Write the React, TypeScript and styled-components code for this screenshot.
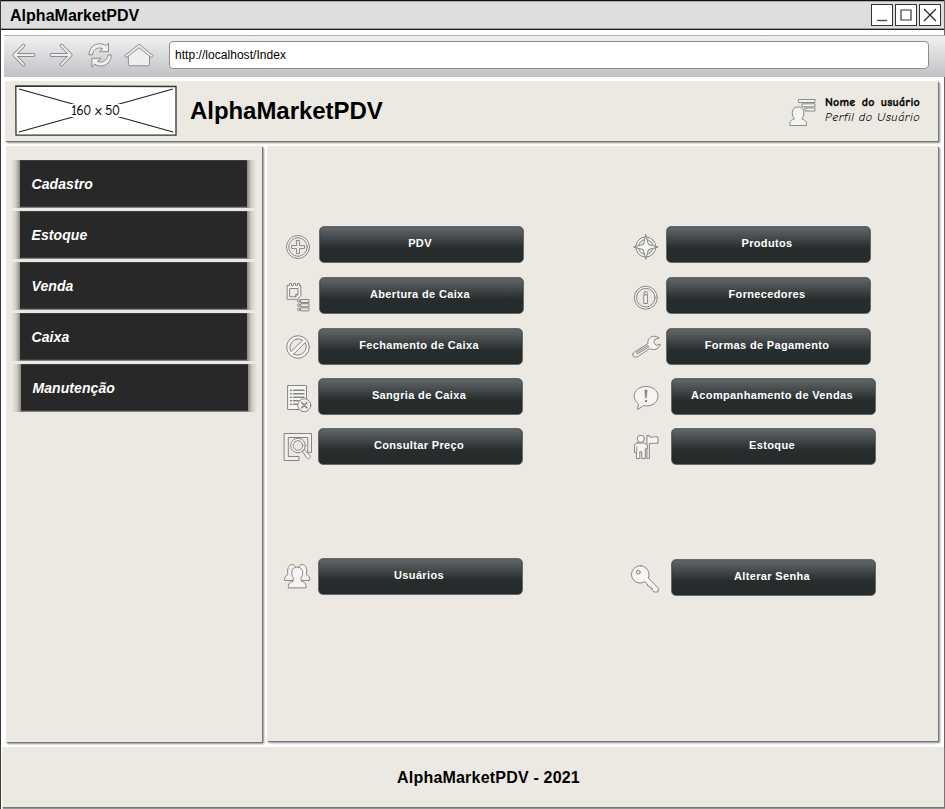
import React from "react";
import styled, { createGlobalStyle } from "styled-components";

const Global = createGlobalStyle`
  * { box-sizing: border-box; }
  body { margin: 0; background: #fff; overflow: hidden; font-family: "Liberation Sans", Arial, sans-serif; color: #000; }
  button { font: inherit; }
`;

const Window = styled.div`
  width: 945px;
  height: 809px;
  display: flex;
  flex-direction: column;
  background: #fff;
  border-left: 1px solid #3a3a3a;
  border-right: 1px solid #666;
`;

const TitleBar = styled.header`
  height: 30px;
  flex: none;
  display: flex;
  align-items: center;
  padding: 0 3px 0 9px;
  background: #dedede;
  border-top: 1px solid #111;
  border-bottom: 1px solid #222;
  box-shadow: inset 0 1px #aaa, inset 0 -1px #999;
`;

const WindowTitle = styled.h1`
  margin: 2px 0 0;
  flex: 1;
  font-size: 16px;
  line-height: 20px;
  font-weight: bold;
  letter-spacing: 0.02px;
`;

const WindowButtons = styled.div`
  display: flex;
  gap: 2px;
`;

const WindowButton = styled.button`
  width: 22px;
  height: 22px;
  padding: 0;
  border: 1.5px solid #333;
  background: #fff;
  display: grid;
  place-items: center;
`;

const Toolbar = styled.nav`
  height: 42px;
  flex: none;
  margin: 5px -1px 0 3px;
  border-top: 1px solid #aeaeb0;
  background: linear-gradient(#f1f1f2, #dddee0 40%, #c1c1c5);
  display: flex;
  align-items: flex-start;
`;

const NavIcons = styled.svg`
  width: 165px;
  height: 41px;
  flex: none;
`;

const Address = styled.div`
  width: 760px;
  height: 28px;
  margin-top: 5px;
  padding-left: 5px;
  border: 1px solid #948b80;
  border-radius: 4px;
  background: #fff;
  font-size: 12px;
  line-height: 26px;
  letter-spacing: 0.04px;
`;

const panelShadow = "1px 1px 1px #777, 2px 2px 2px #999";

const Header = styled.section`
  height: 60px;
  flex: none;
  margin: 4px 6px 0 4px;
  padding: 4px 17px 0 10px;
  display: flex;
  align-items: flex-start;
  background: #ece9e2;
  box-shadow: ${panelShadow};
`;

const LogoPlaceholder = styled.svg`
  width: 162px;
  height: 51px;
  flex: none;
`;

const Brand = styled.h2`
  margin: 12px 0 0 13px;
  flex: 1;
  font-size: 24px;
  line-height: 28px;
  font-weight: bold;
  letter-spacing: -0.05px;
`;

const UserIcon = styled.svg`
  width: 28px;
  height: 30px;
  margin: 13px 8px 0 0;
`;

const UserInfo = styled.div`
  width: 96px;
  margin-top: 10px;
  font-family: "Comic Neue", "Comic Sans MS", "Noto Sans", sans-serif;
  font-size: 12px;
  line-height: 15px;
  white-space: nowrap;
`;

const UserName = styled.div`
  font-weight: bold;
  letter-spacing: 0.22px;
  word-spacing: 1.8px;
  -webkit-text-stroke: 0.3px #000;
`;

const UserRole = styled.div`
  font-style: italic;
  letter-spacing: 0.5px;
`;

const Body = styled.div`
  display: flex;
  gap: 5px;
  height: 596px;
  margin: 5px 6px 0 5px;
`;

const Sidebar = styled.aside`
  width: 256px;
  flex: none;
  padding: 14px 0 0 5px;
  display: flex;
  flex-direction: column;
  gap: 3px;
  background: #ece9e2;
  box-shadow: ${panelShadow};
`;

const MenuItem = styled.a<{ $shift?: number }>`
  width: 245px;
  height: 48px;
  margin-left: ${(p) => p.$shift ?? 0}px;
  padding-left: 20.5px;
  font-size: 14px;
  line-height: 48px;
  font-weight: bold;
  font-style: italic;
  letter-spacing: 0.08px;
  color: #fff;
  background:
    linear-gradient(90deg, rgba(70, 65, 58, 0), rgba(70, 65, 58, 0.18) 5px, rgba(70, 65, 58, 0.58) 9px, transparent 9px),
    linear-gradient(270deg, rgba(70, 65, 58, 0), rgba(70, 65, 58, 0.18) 5px, rgba(70, 65, 58, 0.58) 9px, transparent 9px),
    linear-gradient(#555, #282828 1px, #282828 46px, #555 47px, #aaa) 9px 0 / 227px 48px no-repeat;
`;

const Content = styled.main`
  flex: 1;
  min-width: 0;
  height: 595px;
  padding: 80px 0 0 15px;
  display: flex;
  background: #ece9e2;
  box-shadow: ${panelShadow};
`;

const Column = styled.div`
  width: 348px;
  flex: none;

  & + & {
    width: 294px;
  }
`;

const Entry = styled.div<{ $gap: number }>`
  display: flex;
  height: 37px;
  margin-bottom: ${(p) => p.$gap}px;
`;

const EntryIcon = styled.svg`
  width: 32px;
  height: 32px;
  margin-top: 5px;
  flex: none;
  overflow: visible;
  fill: #f6f5f3;
  stroke: #858582;
  stroke-width: 1;
  stroke-linejoin: round;
  stroke-linecap: round;
`;

const ActionButton = styled.button<{ $offset: number }>`
  width: 205px;
  height: 37px;
  margin-left: ${(p) => p.$offset}px;
  padding: 0 3px 4px 0;
  border: 1px solid #666a6b;
  border-radius: 5px;
  background: linear-gradient(#63676a, #454a4d 30%, #272d2d 60%, #252b2b);
  box-shadow: inset 0 0 1px #222;
  color: #fff;
  font-size: 11px;
  line-height: 14px;
  font-weight: bold;
  letter-spacing: 0.35px;
  white-space: nowrap;
`;

const Footer = styled.footer`
  height: 60px;
  flex: none;
  margin: 5px 0 0 1px;
  padding-left: 31px;
  background: #ece9e2;
  box-shadow: 1px 1px 1px #777, 1px 2px 1px #999;
  text-align: center;
  font-size: 16px;
  line-height: 61px;
  font-weight: bold;
  letter-spacing: 0.2px;
`;

const ring = (x: number, y: number) => (
  <>
    <circle cx={x} cy={y} r="11.5" />
    <circle cx={x} cy={y} r="9.3" fill="#ece9e2" />
  </>
);

const icons: Record<string, React.ReactNode> = {
  plus: (
    <>
      {ring(16, 16)}
      <path d="M14.6 9.5h2.8v5.1h5.1v2.8h-5.1v5.1h-2.8v-5.1H9.5v-2.8h5.1z" />
    </>
  ),
  schedule: (
    <>
      <path d="M5.5 3.5h2v-2h2v2h2v-2h2v2h2v-2h2v2h1.3v10.2l-3.500 3.600H5.500z" />
      <path d="M8 6.500h8v6l-2.300 2.300H8zM16 12.500h-2.300v2.300" fill="#ece9e2" />
      <path d="M19 17.500h8v3h-8zM19 21.700h8v3h-8zM19 25.900h8v3h-8z" fill="#ece9e2" />
      <circle cx="16.800" cy="19" r="1.300" />
      <circle cx="16.800" cy="23.200" r="1.300" />
      <circle cx="16.800" cy="27.400" r="1.300" />
    </>
  ),
  blocked: (
    <>
      <circle cx="16" cy="14" r="11.3" />
      <path d="M8.9 18.3A8.5 8.5 0 0 1 20.3 6.9zM11.7 21.1 23.1 9.7A8.5 8.5 0 0 1 11.7 21.1z" fill="#ece9e2" />
    </>
  ),
  sheet: (
    <>
      <path d="M6 2.5h18.5v24H6z" />
      <path d="M8.5 7.3h1m2 0h10.5M8.5 10.8h1m2 0h10.5M8.5 14.3h1m2 0h10.5M8.5 17.8h1m2 0h6M8.5 21.3h1m2 0h4" strokeWidth="1.4" />
      <circle cx="22.3" cy="22.2" r="6.5" />
      <path d="m19.6 19.5 5.4 5.4m0-5.4-5.4 5.4" strokeWidth="1.6" />
    </>
  ),
  search: (
    <>
      <path d="M2.5.5h27v19h-3.7v-15H6.3v19H17v4H2.5z" fill="#f2f0ed" />
      <circle cx="16" cy="12.5" r="7.3" />
      <circle cx="16" cy="12.5" r="4.8" fill="#ece9e2" />
      <path d="m20.6 18 1.8-1.6 5.4 6c1.7 2.2-1.2 4.3-2.9 2.6z" />
    </>
  ),
  compass: (
    <>
      <circle cx="15.8" cy="16" r="10" />
      <circle cx="15.8" cy="16" r="7.4" fill="#ece9e2" />
      <path d="M15.8 3.7 18.4 13.4l9.7 2.6-9.7 2.6-2.6 9.7-2.6-9.700L3.500 16l9.700-2.600z" />
    </>
  ),
  info: (
    <>
      {ring(15.8, 15.7)}
      <rect x="14.2" y="9.8" width="3.2" height="2.7" rx="1" />
      <path d="M14.2 12.8h3.2v8.7h-3.2z" />
    </>
  ),
  wrench: (
    <>
      <path d="M2.7 21.2c.4-1.7 2-2.2 3.2-3l12-7.5c-.6-3.7 1.8-7 5.4-7.4 2-.2 3.9.3 6 1.7l-4.5 1.2-1 3.3 2.4 2.8 4-1c-.8 3-3 5.2-6.1 5.3-2.4.1-4.1-.8-4.5-1L8.4 23.2c-3.4 2.2-6 .3-5.7-2z" />
      <path d="m7 19.2 11-6.7.8 1.4-11 6.8c-1 .5-1.7-1-.8-1.5z" fill="#ece9e2" />
    </>
  ),
  alert: (
    <>
      <path d="M16 3.5c6.7 0 12 4 12 9.6s-5 9.8-11.5 9.8a14 14 0 0 1-3.2-.4L7.5 26.700l1-5.800C6 19.100 4.200 16.400 4.200 13.100c0-5.600 5.100-9.600 11.800-9.600z" />
      <path d="M14.800 7h2.400l-.7 8h-1z" fill="#858582" strokeWidth=".4" />
      <circle cx="16" cy="18" r="1.200" fill="#858582" stroke="none" />
    </>
  ),
  flagman: (
    <>
      <path d="M17.300 2.500h2v1.300c3 1.400 5-1 8.700.4v6.200c-3-1-5.500.9-8.700-.2v15.300h-2z" />
      <circle cx="10.800" cy="5.800" r="3.600" />
      <path d="M7.200 10h7.200l3 2.300v3.500h-2.100v9.800h-3.500v-7h-2v7H6.500v-6.200H4.500v-6.200c0-1.700 1-3.200 2.700-3.200z" />
      <path d="M6.800 14v5" />
    </>
  ),
  users: (
    <>
      <path d="M2.500 17c0-3 1.400-4.500 3.500-5.500C4.800 7 6.200 1.500 10.200 1.500S15 8 13.200 12l-1 5zM27.800 17c0-3-1.400-4.500-3.500-5.500C25.500 7 24.100 1.500 20.100 1.500S15.300 8 17.100 12l1 5z" />
      <path d="M6.300 24.500c-.3-4 1.500-5.600 4.800-6.300-.5-1.600.8-2.200.5-3-1.800-2.300-2.300-4.700-1.600-7.500.6-2.300 2.400-3.600 5.200-3.600s4.600 1.300 5.200 3.600c.7 2.800.2 5.200-1.600 7.500-.3.800 1 1.400.5 3 3.300.7 5.100 2.300 4.800 6.300z" />
    </>
  ),
  key: (
    <>
      <path d="M10.400 1.800a8.600 8.600 0 0 1 7.800 12.200l10.200 10.200-.4 3.700-3.700.2-2.200-2.200.2-1.700-2-.2-.6-1.800-2-.3-.4-2-2.500-2.300A8.600 8.600 0 1 1 10.400 1.800z" />
      <circle cx="8.300" cy="8.200" r="1.900" fill="#ece9e2" />
    </>
  ),
};

type Action = { label: string; icon: string; offset: number; gap: number };

const columns: Action[][] = [
  [
    { label: "PDV", icon: "plus", offset: 5, gap: 14 },
    { label: "Abertura de Caixa", icon: "schedule", offset: 5, gap: 14 },
    { label: "Fechamento de Caixa", icon: "blocked", offset: 4, gap: 13 },
    { label: "Sangria de Caixa", icon: "sheet", offset: 4, gap: 13 },
    { label: "Consultar Preço", icon: "search", offset: 4, gap: 93 },
    { label: "Usuários", icon: "users", offset: 4, gap: 0 },
  ],
  [
    { label: "Produtos", icon: "compass", offset: 4, gap: 14 },
    { label: "Fornecedores", icon: "info", offset: 4, gap: 14 },
    { label: "Formas de Pagamento", icon: "wrench", offset: 4, gap: 13 },
    { label: "Acompanhamento de Vendas", icon: "alert", offset: 9, gap: 13 },
    { label: "Estoque", icon: "flagman", offset: 9, gap: 94 },
    { label: "Alterar Senha", icon: "key", offset: 9, gap: 0 },
  ],
];

const arrowBack = "M21 19H2M11 9.5 1.8 19 11 28.5";

export default function App() {
  return (
    <>
      <Global />
      <Window>
        <TitleBar>
          <WindowTitle>AlphaMarketPDV</WindowTitle>
          <WindowButtons>
            <WindowButton aria-label="Minimizar">
              <svg width="18" height="18"><path d="M4 14.5h10" stroke="#444" strokeWidth="1.3" /></svg>
            </WindowButton>
            <WindowButton aria-label="Maximizar">
              <svg width="18" height="18"><path d="M4 4h10v10H4z" fill="none" stroke="#333" strokeWidth="1.2" /></svg>
            </WindowButton>
            <WindowButton aria-label="Fechar">
              <svg width="18" height="18"><path d="m3 3 12 12M15 3 3 15" stroke="#222" strokeWidth="1.2" /></svg>
            </WindowButton>
          </WindowButtons>
        </TitleBar>

        <Toolbar>
          <NavIcons viewBox="4 36 165 41" fill="none" strokeLinecap="round" strokeLinejoin="round">
            <g transform="translate(12.5 36)">
              <path d={arrowBack} stroke="#8b8c8f" strokeWidth="3.8" />
              <path d={arrowBack} stroke="#ededee" strokeWidth="1.8" />
            </g>
            <g transform="translate(72.5 36) scale(-1 1)">
              <path d={arrowBack} stroke="#8b8c8f" strokeWidth="3.8" />
              <path d={arrowBack} stroke="#ededee" strokeWidth="1.8" />
            </g>
            <g fill="#eeeeef" stroke="#8b8c8f">
              <path d="M89 54.5c0-6.500 5-10.700 10.500-10.700 2.300 0 4.300.6 6.200 1.900l2.800-2.500v8.500h-9l3.200-3c-4.700-2.300-9.500.8-10.300 5.800z" />
              <path d="M111.300 55.300c0 6.500-5 10.700-10.500 10.700-2.300 0-4.300-.6-6.200-1.900l-2.800 3v-8.800h9.500l-3.700 3c4.700 2.300 9.500-1 10.300-6z" />
              <path d="M128.500 53.500 139 47.300l10.500 6.400v10.600c0 1-.5 1.500-1.500 1.500h-18c-1 0-1.500-.5-1.500-1.500z" />
              <path d="m125 55.500 14-11.300 14 11.300-1.500 2L139 47.700 126.500 57.500z" />
            </g>
          </NavIcons>
          <Address>http://localhost/Index</Address>
        </Toolbar>

        <Header>
          <LogoPlaceholder viewBox="0 0 162 51">
            <path d="M.8 1 161 1.500v48.700L1 50z" fill="#fff" stroke="#333" strokeWidth="1.3" />
            <path d="M4 4 158 47M4 47 158 4" stroke="#222" strokeWidth="1.2" />
            <path d="M56 19h50v13H56z" fill="#fff" />
            <text x="56.5" y="30" textLength="48.5" fontFamily="Comic Neue, Comic Sans MS, Noto Sans, sans-serif" fontSize="13" stroke="#000" strokeWidth=".2">160 x 50</text>
          </LogoPlaceholder>
          <Brand>AlphaMarketPDV</Brand>
          <UserIcon viewBox="0 0 28 30" fill="#f4f4f3" stroke="#8b8b88">
            <path d="M9.5 1.5H26v3H9.5zM13 5.800h13v3H13zM16 10h10v3H16z" />
            <path d="M.8 27.500c-.4-4 1-5.500 4.800-6.500-2.400-2.500-2.700-5.500-2-8.200 1-5.200 10-5.200 11 0 .7 2.700.4 5.700-2 8.200 3.800 1 5.200 2.500 4.800 6.500z" />
          </UserIcon>
          <UserInfo>
            <UserName>Nome do usuário</UserName>
            <UserRole>Perfil do Usuário</UserRole>
          </UserInfo>
        </Header>

        <Body>
          <Sidebar>
            <MenuItem>Cadastro</MenuItem>
            <MenuItem>Estoque</MenuItem>
            <MenuItem>Venda</MenuItem>
            <MenuItem>Caixa</MenuItem>
            <MenuItem $shift={1}>Manutenção</MenuItem>
          </Sidebar>
          <Content>
            {columns.map((actions, i) => (
              <Column key={i}>
                {actions.map((a) => (
                  <Entry key={a.label} $gap={a.gap}>
                    <EntryIcon viewBox="0 0 32 32">{icons[a.icon]}</EntryIcon>
                    <ActionButton $offset={a.offset}>{a.label}</ActionButton>
                  </Entry>
                ))}
              </Column>
            ))}
          </Content>
        </Body>

        <Footer>AlphaMarketPDV - 2021</Footer>
      </Window>
    </>
  );
}
